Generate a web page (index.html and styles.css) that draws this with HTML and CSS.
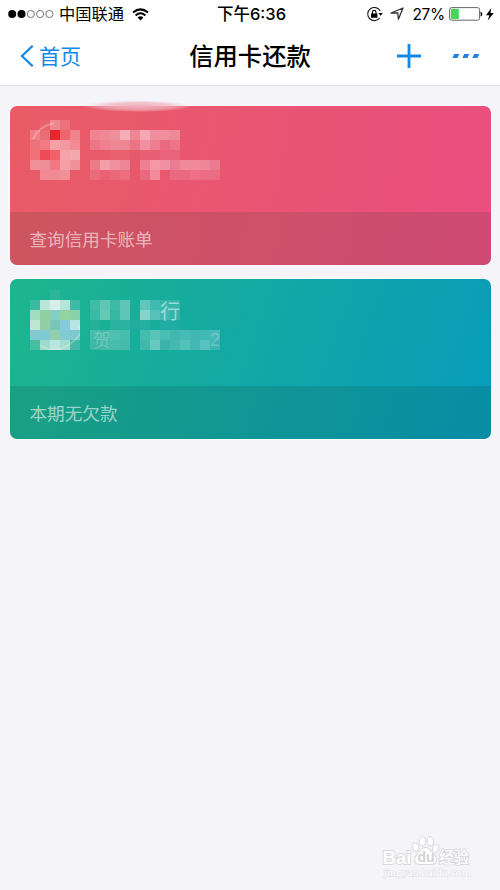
FILE: index.html
```
<!DOCTYPE html>
<html lang="zh-CN">
<head>
<meta charset="utf-8">
<title>信用卡还款</title>
<link rel="stylesheet" href="styles.css">
</head>
<body>
<header class="header">
  <div class="status">
    <div class="status-left">
      <svg width="46" height="12" viewBox="0 0 46 12"><g fill="#000"><circle cx="4.2" cy="6" r="4"/><circle cx="13.5" cy="6" r="4"/></g><g fill="none" stroke="#555" stroke-width=".8"><circle cx="22.8" cy="6" r="3.6"/><circle cx="32.1" cy="6" r="3.6"/><circle cx="41.4" cy="6" r="3.6"/></g></svg>
      <span class="carrier">中国联通</span>
      <svg class="wifi" width="17" height="13" viewBox="0 0 17 13"><g fill="none" stroke="#000" stroke-width="2"><path d="M1 4.5Q8.5-1.7 16 4.5"/><path d="M3.6 7.4Q8.5 3.2 13.4 7.4"/></g><path d="M5.6 9.5Q8.5 7.1 11.4 9.5L8.5 12.6Z"/></svg>
    </div>
    <div class="clock">下午6:36</div>
    <div class="status-right">
      <svg width="16" height="15" viewBox="0 0 16 15"><path d="M13.2 4A6.6 6.6 0 1 0 12.7 10.9" fill="none" stroke="#222" stroke-width="1.1"/><path d="M11.4 6h4.4l-2.2 2.8ZM4 6.4h6.4v4.4H4Z"/><path d="M5.4 7V5.2a1.8 1.8 0 0 1 3.6 0V7" fill="none" stroke="#000" stroke-width="1.1"/></svg>
      <svg class="locate" width="14" height="14" viewBox="0 0 14 14"><path d="M1 6L13 1L8.4 12.2L7.8 6Z" fill="none" stroke="#333" stroke-width="1.3" stroke-linejoin="round"/></svg>
      <span class="percent">27%</span>
      <svg class="battery" width="34" height="14" viewBox="0 0 34 14"><rect x=".6" y=".6" width="30" height="12.6" rx="2" fill="#fff" stroke="#666" stroke-width="1"/><rect x="1.8" y="1.8" width="8" height="10.2" fill="#45d65c"/><path d="M31.6 4.5Q33.3 5 33.3 7T31.6 9.5Z"/></svg>
      <svg class="bolt" width="8" height="13" viewBox="0 0 8 13"><path d="M5.3 0L0 7.2H3.3L1.8 12.6L7.8 5H4.4Z"/></svg>
    </div>
  </div>
  <nav class="nav">
    <div class="back">
      <svg width="14" height="24" viewBox="0 0 14 24"><path d="M12.7 1.7L2 12L12.7 22.3" fill="none" stroke="#1287e8" stroke-width="2.2"/></svg>
      <span>首页</span>
    </div>
    <h1 class="title">信用卡还款</h1>
    <div class="actions">
      <svg width="26" height="26" viewBox="0 0 26 26"><path d="M1 13H25M13 1V25" stroke="#1287e8" stroke-width="2.8"/></svg>
      <svg class="more" width="28" height="6" viewBox="0 0 28 6"><path d="M2.2 1H7.3L5.5 5H.4ZM12.2 1H17.3L15.5 5H10.4ZM22.2 1H27.3L25.5 5H20.4Z" fill="#2380e2"/></svg>
    </div>
  </nav>
</header>
<main class="cards">
  <section class="card card-red">
    <svg class="glow" width="130" height="12" viewBox="0 0 130 12"><defs><radialGradient id="g"><stop offset="0" stop-color="#efb0bb"/><stop offset=".6" stop-color="#f0b4be" stop-opacity=".7"/><stop offset="1" stop-color="#f5d5dc" stop-opacity="0"/></radialGradient></defs><ellipse cx="66" cy="6" rx="54" ry="6" fill="url(#g)"/></svg>
    <div class="card-body">
      <svg class="mosaic" width="50" height="60" data-rows="- e9626c f08790 ec727b -|ed7f87 ec6c74 e92530 ef646f ee838d|ec727a f07b82 f5a1a7 f497a0 f18b95|f07278 ef4b57 ef626a f5a3aa f5a9ae|f09098 f08e96 f17a82 f4a0a6 f09098|- f08a92 f08a94 f09096 -"><path class="arc" d="M3 19Q8 7 24 3"/></svg>
      <svg class="mosaic" width="130" height="60" data-rows="-|ee8590 ef8a95 ef8f99 f4aeb8 ee8793 f4a8b3 ef8e9c ef8e9c ee8a98|ec7684 ef808d ee8793 ee8793 eb7384 f090a0 ee7d90 ea6a80 ec7588|- - e9606f e9606f - e85f74 e85f74 e9647a e9647a|ec7c88 f49ea9 f090a0 ee8795 - ee8094 f497a6 f090a2 ec7c92 f08a9b f08a9b ef8598 ec7a90|ea6b7a ea6074 eb6678 ec6e80 - ea6880 f08a9c - ea6880 ea6880 eb7088 eb6c84 ea6c82"></svg>
    </div>
    <div class="card-foot">查询信用卡账单</div>
  </section>
  <section class="card card-green">
    <div class="card-body">
      <svg class="mosaic" width="50" height="60" data-rows="- - 29b69a - -|3dbba0 bbe6dc d6efea b5e5da 3dbba5|a0dcc2 92cfa0 84cec5 94d2a0 8ad2ae|bfe6d2 92cfa2 78c6b8 86cadc b8e4e6|80cbcf 80cad4 92cfaa 80cbd4 7cc8cc|45bfa0 a0dccb b8e6e0 a2ddd0 42b9a6"><path class="arc" d="M10 55Q25 65 40 54T49 37"/></svg>
      <svg class="mosaic" width="130" height="60" data-rows="-|3ebca6 60c7b4 3ebaa8 60c6b8 - 60c6ba 40bab0 36b5aa 38b5aa|3ab9a4 64cab6 34b8a2 60c6b8 - 84d4c8 54c2b8 3fb9b0 34b4aa|25b198 - 2ab3a0 2ab3a0 20ada0 25aea2 - 20aca4 20aca4|46bda8 46bda8 50c0b0 48bcae - 44bcb0 58c4b8 4abdb4 40b8b0 48bab4 40b8b0 40b8b4 4abab8|3cb9a4 44bba8 48bdac 44bbac - 40b8ac 68cabe 3cb4ac 44b9b0 54c0ba 44b9b4 58c2be 3cb4b4"><text class="ghost ghost-main" x="70" y="29">行</text><text class="ghost" x="3" y="57">贺</text><text class="ghost" x="120" y="56">2</text></svg>
    </div>
    <div class="card-foot">本期无欠款</div>
  </section>
</main>
<footer class="mark">
  <svg width="122" height="60" viewBox="378 830 122 60">
    <g class="mark-shape"><ellipse cx="415.5" cy="847" rx="3.2" ry="4.4" transform="rotate(-20 415.5 847)"/><ellipse cx="422.3" cy="841" rx="3.3" ry="4.8"/><ellipse cx="430.3" cy="841.3" rx="3.3" ry="4.6"/><ellipse cx="435.7" cy="848.5" rx="3.1" ry="4.3" transform="rotate(20 435.7 848.5)"/><path d="M425.5 847.5C420 847.5 420 851.5 417 854.5S413 864.5 420 864.5H431C438 864.5 438 857.5 434 854.5S431 847.5 425.5 847.5Z"/></g>
    <g class="mark-name"><text x="382.5" y="863.5" textLength="29" lengthAdjust="spacingAndGlyphs">Bai</text><text class="mark-cn" x="439" y="862.5" textLength="30" lengthAdjust="spacingAndGlyphs">经验</text></g>
    <text class="mark-du" x="417.5" y="862">du</text>
    <text class="mark-url" x="383.5" y="876" textLength="87" lengthAdjust="spacingAndGlyphs">jingyan.baidu.com</text>
  </svg>
</footer>
<script src="mosaic.js"></script>
</body>
</html>
```
FILE: styles.css
```
* { box-sizing: border-box; }
body {
  margin: 0;
  width: 500px;
  height: 890px;
  display: flex;
  flex-direction: column;
  overflow: hidden;
  background: #f4f4f9;
  color: #000;
  font-family: "Liberation Sans", "Noto Sans CJK SC", sans-serif;
}
svg { display: block; flex: none; }
.header {
  height: 86px;
  background: #fff;
  border-bottom: 1px solid #dfe1e6;
}
.status {
  height: 28px;
  display: grid;
  grid-template-columns: 1fr auto 1fr;
  align-items: center;
  padding: 0 6px 0 8px;
  font-size: 16.3px;
  line-height: 28px;
}
.status-left, .status-right { display: flex; align-items: center; }
.status-right { justify-content: flex-end; }
.carrier { margin-left: 5px; padding-top: 1px; line-height: 27px; }
.wifi { margin-left: 8px; }
.clock { padding-left: 1px; font-family: Inter, "Noto Sans CJK SC", sans-serif; font-weight: 500; font-size: 16.5px; }
.locate { margin-left: 7px; }
.percent { margin: 0 4px 0 8px; padding-top: 1px; line-height: 27px; font-family: Inter, sans-serif; font-size: 15.5px; letter-spacing: -.3px; }
.bolt { margin-left: 3px; }
.nav {
  height: 56px;
  display: grid;
  grid-template-columns: 1fr auto 1fr;
  align-items: center;
  padding: 0 20px;
}
.back { display: flex; align-items: center; gap: 5px; color: #1287e8; font-size: 21px; line-height: 30px; }
.back span { padding-top: 2px; }
.title { margin: 0; padding-top: 2px; font-size: 24.3px; line-height: 34px; font-weight: 500; }
.actions { display: flex; align-items: center; justify-content: flex-end; gap: 30px; }
.cards { display: flex; flex-direction: column; gap: 13.5px; padding: 19.7px 9.3px 0 9.5px; }
.card {
  position: relative;
  height: 159.8px;
  display: flex;
  flex-direction: column;
  border-radius: 7px;
  box-shadow: 0 0 0 1.5px rgba(255, 255, 255, .6);
}
.card-red { background: linear-gradient(100deg, #e85c65, #ea4f80); }
.card-green { background: linear-gradient(110deg, #1eb58d, #12a8a5 50%, #079cbb); }
.glow { position: absolute; left: 62px; top: -6px; }
.card-body { flex: 1; display: flex; gap: 10px; padding: 14.3px 20.5px 0; }
.card-green .card-body { padding-top: 11px; }
.card-foot {
  height: 53px;
  padding: 1px 0 0 20px;
  border-radius: 0 0 7px 7px;
  background: rgba(40, 50, 50, .14);
  color: rgba(255, 255, 255, .59);
  font-size: 17.6px;
  line-height: 54px;
}
.card-green .card-foot { background: rgba(15, 50, 45, .14); }
.arc { fill: none; stroke: rgba(255, 255, 255, .25); stroke-width: 2; }
.ghost { fill: rgba(255, 255, 255, .22); font-size: 18px; }
.ghost-main { fill: rgba(255, 255, 255, .5); font-size: 20px; }
.mark { margin-top: auto; align-self: flex-end; }
.mark-shape, .mark-name { fill: #fff; stroke: #d9d9de; stroke-width: 1.1; }
.mark-name { font-weight: 700; font-size: 19px; stroke-width: 1.8; paint-order: stroke; }
.mark-du { fill: #d2d2d6; font-size: 14px; font-weight: 700; }
.mark-cn { font-size: 15.5px; font-weight: 500; }
.mark-url { fill: #fff; stroke: #e0e0e5; stroke-width: .9; paint-order: stroke; font-family: "Liberation Serif", serif; font-size: 10.5px; }
```
FILE: mosaic.js
```
// Fill each mosaic with 10px cells taken from its rows of colours.
document.querySelectorAll('.mosaic').forEach(function (svg) {
  var overlay = svg.firstChild;
  svg.dataset.rows.split('|').forEach(function (row, y) {
    row.split(' ').forEach(function (color, x) {
      if (color === '-') return;
      var cell = document.createElementNS('http://www.w3.org/2000/svg', 'rect');
      cell.setAttribute('x', x * 10);
      cell.setAttribute('y', y * 10);
      cell.setAttribute('width', 10);
      cell.setAttribute('height', 10);
      cell.setAttribute('fill', '#' + color);
      cell.setAttribute('shape-rendering', 'crispEdges');
      svg.insertBefore(cell, overlay);
    });
  });
});
```
